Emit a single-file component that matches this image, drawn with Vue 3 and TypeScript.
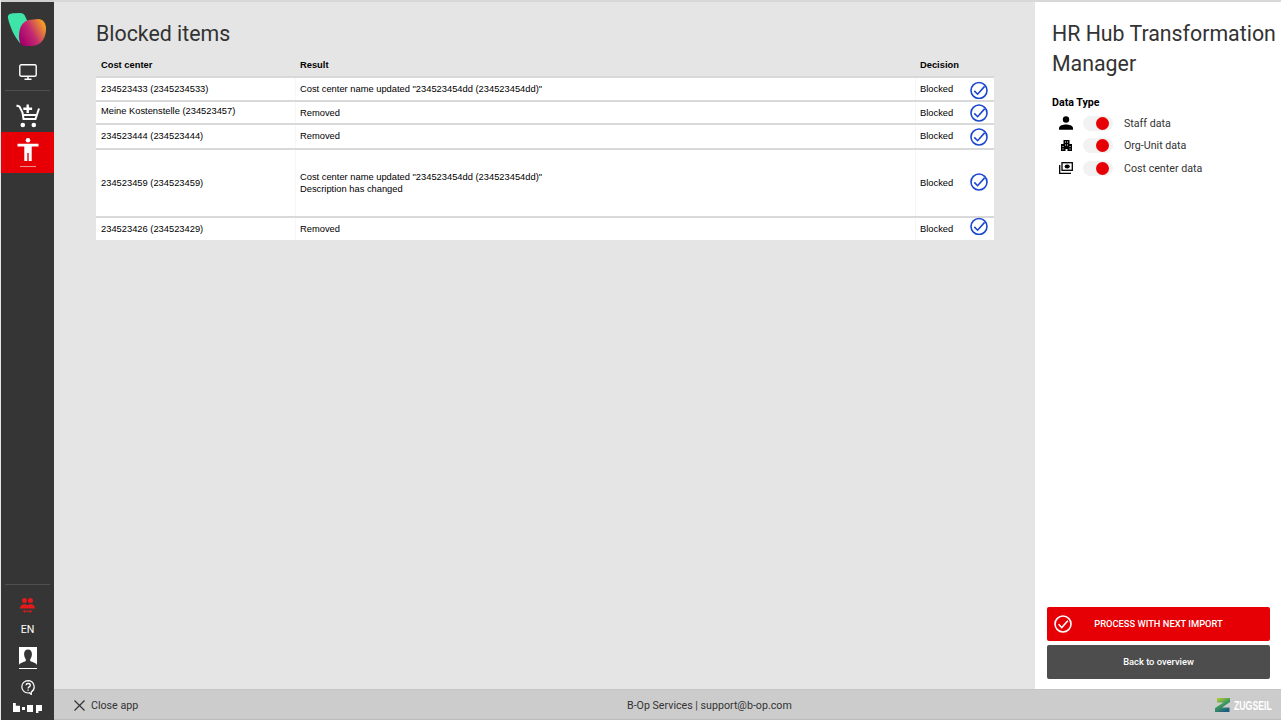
<script setup lang="ts">
interface Row { center: string; result: string[]; h: number; nameShift: number; iconShift: number; lift: number }
const rows: Row[] = [
  { center: '234523433 (2345234533)', result: ['Cost center name updated "234523454dd (234523454dd)"'], h: 24, nameShift: 0, iconShift: 1.5, lift: 0 },
  { center: 'Meine Kostenstelle (234523457)', result: ['Removed'], h: 23, nameShift: -2, iconShift: 0, lift: 0 },
  { center: '234523444 (234523444)', result: ['Removed'], h: 25, nameShift: 0, iconShift: 0, lift: 1 },
  { center: '234523459 (234523459)', result: ['Cost center name updated "234523454dd (234523454dd)"', 'Description has changed'], h: 68, nameShift: 0, iconShift: -1, lift: 0 },
  { center: '234523426 (234523429)', result: ['Removed'], h: 24, nameShift: 0, iconShift: -2.5, lift: 0 },
]
const types = ['Staff data', 'Org-Unit data', 'Cost center data']
</script>

<template>
  <div class="app">
    <aside class="side">
      <svg class="logo" width="38" height="33" viewBox="0 0 38 33">
        <defs>
          <linearGradient id="lg" x1="0.1" y1="0.8" x2="1" y2="0.3">
            <stop offset="0" stop-color="#a8006e" />
            <stop offset="0.45" stop-color="#c22a70" />
            <stop offset="1" stop-color="#f5a023" />
          </linearGradient>
        </defs>
        <path d="M0 5C-.5 2 1.500.500 5 .300L12 0c3 0 4.500 1.500 5.500 4L22 14 12 30C7 25 1.500 13 0 5z" fill="#3fe4a8" />
        <path d="M11 23c0-9 4-15 10-16l9-1c5 0 8 4 8 10 0 8-4 14-9 16-5 1.300-9 1.300-12 1-4-.5-6-4-6-10z" fill="url(#lg)" />
      </svg>
      <svg class="ic mon" width="18" height="16" viewBox="0 0 18 16" fill="none" stroke="#fff" stroke-width="1.400">
        <rect x=".8" y=".8" width="16.400" height="11.400" rx="1.500" />
        <path d="M9 12.500v2.500M5.500 15.200h7" />
      </svg>
      <div class="sep"></div>
      <svg class="ic cart" width="24" height="24" viewBox="0 0 24 24" fill="none" stroke="#fff" stroke-width="2">
        <path d="M.5 1.500l3 1L6.500 8.500 7.500 15H19.500L23 4.500" />
        <path d="M7 11h14" />
        <path d="M11.700 .5v8.500M7.300 4.700h8.800" stroke-width="2.400" />
        <circle cx="6.800" cy="21" r="2.300" fill="#fff" stroke="none" />
        <circle cx="17.800" cy="21" r="2.300" fill="#fff" stroke="none" />
      </svg>
      <div class="active">
        <svg width="22" height="23" viewBox="0 0 22 23" fill="#fff">
          <circle cx="11" cy="2.300" r="2.300" />
          <path d="M.5 5.800h21v2.800h-6.800V23h-3v-8h-1.400v8h-3V8.600H.5z" />
        </svg>
        <div class="underline"></div>
      </div>
      <div class="grow"></div>
      <div class="sep bottom"></div>
      <svg class="ic people" width="15" height="15" viewBox="0 0 15 15" fill="#e8191c">
        <circle cx="4.500" cy="2.500" r="2.500" />
        <circle cx="10.500" cy="2.500" r="2.500" />
        <path d="M0 10.500c0-3 2.300-4.200 4.500-4.200 1.300 0 2.300.3 3 .9.700-.6 1.700-.9 3-.9 2.200 0 4.500 1.200 4.500 4.200z" />
        <path d="M3.500 13.300h8" stroke="#e8191c" stroke-width="1" />
        <path d="M5 11.800l-1.500 1.500L5 14.800M10 11.800l1.500 1.500L10 14.800" stroke="#e8191c" stroke-width="1" fill="none" />
      </svg>
      <div class="lang">EN</div>
      <svg class="avatar" width="18" height="22" viewBox="0 0 18 22">
        <rect width="18" height="22" fill="#fff" />
        <path d="M9 2.500c2.600 0 3.900 1.800 3.900 4.600 0 2.300-.8 4-1.700 5.200v1.600c1.800 1.200 6.800 1.800 6.800 4.500v2.600H0v-2.600c0-2.700 5-3.300 6.800-4.500v-1.600C5.900 11.100 5.100 9.400 5.100 7.100c0-2.800 1.300-4.600 3.900-4.600z" fill="#353535" />
      </svg>
      <svg class="ic help" width="14" height="15" viewBox="0 0 14 15" fill="none" stroke="#fff" stroke-width="1.200">
        <path d="M7 .6a6.200 6.200 0 1 0 0 12.400c.5 0 1 0 1.500-.2l1.800 1.700v-2.500A6.200 6.200 0 0 0 7 .6z" />
        <path d="M5 5.300c.2-2.400 4.300-2.400 4.300 0 0 1.700-2.200 1.500-2.200 3.200" stroke-width="1.300" />
        <path d="M7.100 9.500v1.300" stroke-width="1.300" />
      </svg>
      <div class="bop"><i class="b1"></i><i class="d"></i><i class="b2"></i><i class="b3"></i></div>
    </aside>

    <div class="main">
      <div class="body">
        <main class="content">
          <h1>Blocked items</h1>
          <div class="thead">
            <div class="c1">Cost center</div>
            <div class="c2">Result</div>
            <div class="c3">Decision</div>
          </div>
          <div v-for="r in rows" :key="r.center" class="row" :style="{ height: r.h + 'px' }">
            <div class="c1" :style="{ transform: `translateY(${r.nameShift - r.lift}px)` }">{{ r.center }}</div>
            <div class="c2" :style="{ paddingBottom: r.lift * 2 + 'px' }"><div v-for="l in r.result" :key="l">{{ l }}</div></div>
            <div class="c3" :style="{ paddingBottom: r.lift * 2 + 'px' }">Blocked</div>
            <div class="c4">
              <svg :style="{ transform: `translateY(${r.iconShift}px)` }" width="18" height="18" viewBox="0 0 18 18" fill="none" stroke="#1a47d0" stroke-width="1.600">
                <circle cx="9" cy="9" r="8" />
                <path d="M4.300 9.400l3.300 3.300 7-7.800" />
              </svg>
            </div>
          </div>
        </main>
        <section class="panel">
          <h2>HR Hub Transformation Manager</h2>
          <div class="dt">Data Type</div>
          <div v-for="(t, i) in types" :key="t" class="type">
            <span class="ticon">
              <svg v-if="i === 0" width="14" height="14" viewBox="0 0 14 14" fill="#000">
                <circle cx="7" cy="3.500" r="3.200" />
                <path d="M0 13.800V12c0-2.600 4.500-3.600 7-3.600s7 1 7 3.600v1.800z" />
              </svg>
              <svg v-else-if="i === 1" width="11" height="11" viewBox="0 0 11 11" fill="#000">
                <path d="M2.500 0h6v4H11v7H6.500V9h-2v2H0V4h2.500z" />
                <path d="M4 1.500h1v1H4zM6 1.500h1v1H6zM1.500 6h1v1h-1zM4 4.500h1v1H4zM6 4.500h1v1H6zM8.500 6h1v1h-1zM1.500 8.500h1v1h-1zM8.500 8.500h1v1h-1z" fill="#fff" />
              </svg>
              <svg v-else width="14" height="12" viewBox="0 0 14 12" fill="none" stroke="#000">
                <path d="M.7 3v8.300H12" stroke-width="1.300" />
                <rect x="3" y=".7" width="10.300" height="7.600" stroke-width="1.300" />
                <ellipse cx="8.200" cy="4.500" rx="2.600" ry="1.900" fill="#000" stroke="none" />
              </svg>
            </span>
            <span class="toggle"><span class="knob"></span></span>
            <span class="tlabel">{{ t }}</span>
          </div>
          <div class="grow"></div>
          <button class="btn red">
            <svg class="bic" width="18" height="18" viewBox="0 0 18 18" fill="none" stroke="#fff" stroke-width="1.600">
              <circle cx="9" cy="9" r="8" />
              <path d="M4.600 9.300l3.200 3.200 6-6.800" />
            </svg>
            PROCESS WITH NEXT IMPORT
          </button>
          <button class="btn dark">Back to overview</button>
        </section>
      </div>
      <footer class="foot">
        <div class="close">
          <svg width="11" height="11" viewBox="0 0 11 11" stroke="#333" stroke-width="1.200"><path d="M.5.500l10 10M10.500.500l-10 10" /></svg>
          <span>Close app</span>
        </div>
        <div class="mid">B-Op Services | support@b-op.com</div>
        <div class="brand">
          <svg width="15" height="14" viewBox="0 0 15 14">
            <defs>
              <linearGradient id="zg" x1="0" y1="0" x2="0.6" y2="1">
                <stop offset="0" stop-color="#ccd42c" />
                <stop offset="0.55" stop-color="#3f9a5d" />
                <stop offset="1" stop-color="#1f5f7f" />
              </linearGradient>
            </defs>
            <path d="M2 0h13v4L7 9.500h7.500V14H0v-4l8.500-5.500H2z" fill="url(#zg)" />
          </svg>
          <span class="zug">ZUGSEIL</span>
        </div>
      </footer>
    </div>
  </div>
</template>

<style>
html, body { margin: 0; padding: 0; overflow: hidden; }
</style>

<style scoped>
.app { display: flex; width: 1281px; height: 720px; background: #e5e5e5; font-family: Roboto, sans-serif; overflow: hidden; }
.side { width: 53px; margin-left: 1px; background: #353535; display: flex; flex-direction: column; align-items: center; flex: none; border-top: 2px solid #d0d0d0; box-sizing: border-box; }
.logo { margin-top: 11px; align-self: flex-start; margin-left: 7px; flex: none; overflow: visible; }
.ic { flex: none; display: block; }
.mon { margin-top: 18px; }
.sep { width: 45px; height: 1px; background: #4f4f4f; margin-top: 10px; flex: none; }
.cart { margin-top: 13px; }
.active { width: 53px; height: 41px; background: #e60005; margin-top: 4px; display: flex; flex-direction: column; align-items: center; padding-top: 6px; box-sizing: border-box; flex: none; }
.underline { width: 16px; height: 1px; background: #f08a8c; margin-top: 5px; }
.grow { flex: 1; }
.sep.bottom { margin: 0 0 13px; }
.lang { color: #fff; font-size: 10.670px; line-height: 12px; margin-top: 11px; }
.avatar { margin-top: 11px; flex: none; }
.help { margin-top: 11px; }
.bop { display: flex; align-items: flex-start; height: 10px; margin: 8px 0 7px; }
.bop i { display: block; background: #fff; }
.b1 { width: 7px; height: 9px; clip-path: polygon(0 0, 40% 0, 40% 30%, 100% 30%, 100% 100%, 0 100%); }
.d { width: 3px; height: 3px; margin: 4px 2px 0; }
.b2 { width: 6px; height: 7px; margin: 2px 3px 0 0; }
.b3 { width: 6px; height: 8px; margin-top: 2px; clip-path: polygon(0 0, 100% 0, 100% 75%, 40% 75%, 40% 100%, 0 100%); }
.main { flex: 1; display: flex; flex-direction: column; min-width: 0; }
.body { flex: 1; display: flex; min-height: 0; border-top: 2px solid #d8d8d8; }
.content { flex: 1; padding: 0 41px 0 42px; min-width: 0; }
h1 { margin: 18px 0 0; font-size: 21.330px; font-weight: 400; line-height: 28px; color: #333; }
.thead { display: flex; height: 24px; padding-top: 1px; box-sizing: border-box; align-items: center; margin-top: 4px; font: 700 9.330px "Liberation Sans", sans-serif; color: #000; }
.c1 { width: 199px; padding-left: 5px; box-sizing: border-box; flex: none; }
.c2 { width: 620px; padding-left: 5px; box-sizing: border-box; flex: none; }
.c3 { width: 48px; padding-left: 5px; box-sizing: border-box; flex: none; }
.c4 { flex: 1; display: flex; justify-content: center; }
.c4 svg { display: block; }
.row { display: flex; align-items: center; background: #fff; border-top: 2px solid #d9d9d9; box-sizing: border-box; font: 9.330px/12px "Liberation Sans", sans-serif; color: #000; }
.row .c3, .row .c2 { align-self: stretch; display: flex; flex-direction: column; justify-content: center; border-left: 1px solid #f6f6f6; padding-left: 4px; }
.panel { width: 246px; flex: none; background: #fff; padding: 17px 0 10px 12px; box-sizing: border-box; display: flex; flex-direction: column; }
h2 { margin: 0 0 0 5px; font-size: 21.330px; font-weight: 400; line-height: 30px; color: #333; }
.dt { font-size: 10.670px; font-weight: 700; line-height: 14px; color: #000; margin: 17px 0 2px 5px; }
.type { display: flex; align-items: center; height: 22.500px; }
.ticon { width: 14px; margin-left: 12px; display: flex; justify-content: center; }
.toggle { width: 30px; height: 15px; background: #f2f2f2; border-radius: 8px; margin-left: 10px; position: relative; flex: none; }
.knob { position: absolute; right: 4px; top: 1px; width: 13px; height: 13px; background: #e60005; border-radius: 50%; }
.tlabel { font-size: 10.670px; color: #333; margin-left: 11px; }
.btn { height: 34px; border: 0; border-radius: 2px; color: #fff; font: 500 9.330px Roboto, sans-serif; position: relative; padding: 0 0 2px; width: 223px; flex: none; }
.red { background: #e60005; margin-bottom: 4px; }
.dark { background: #4d4d4d; }
.bic { position: absolute; left: 7px; top: 8px; }
.foot { height: 31px; flex: none; background: #ccc; border-top: 1px solid #c4c4c4; border-bottom: 1px solid #bbb; box-sizing: border-box; display: grid; grid-template-columns: 573px auto 1fr; align-items: center; font-size: 10.670px; color: #333; padding-top: 1px; }
.close { display: flex; align-items: center; gap: 6px; padding-left: 20px; }
.brand { display: flex; justify-content: flex-end; align-items: center; gap: 4px; padding-right: 9px; }
.zug { display: inline-block; width: 38px; white-space: nowrap; color: #fff; font: 700 13px "Liberation Sans", sans-serif; transform: scaleX(0.67); transform-origin: left center; }
</style>
